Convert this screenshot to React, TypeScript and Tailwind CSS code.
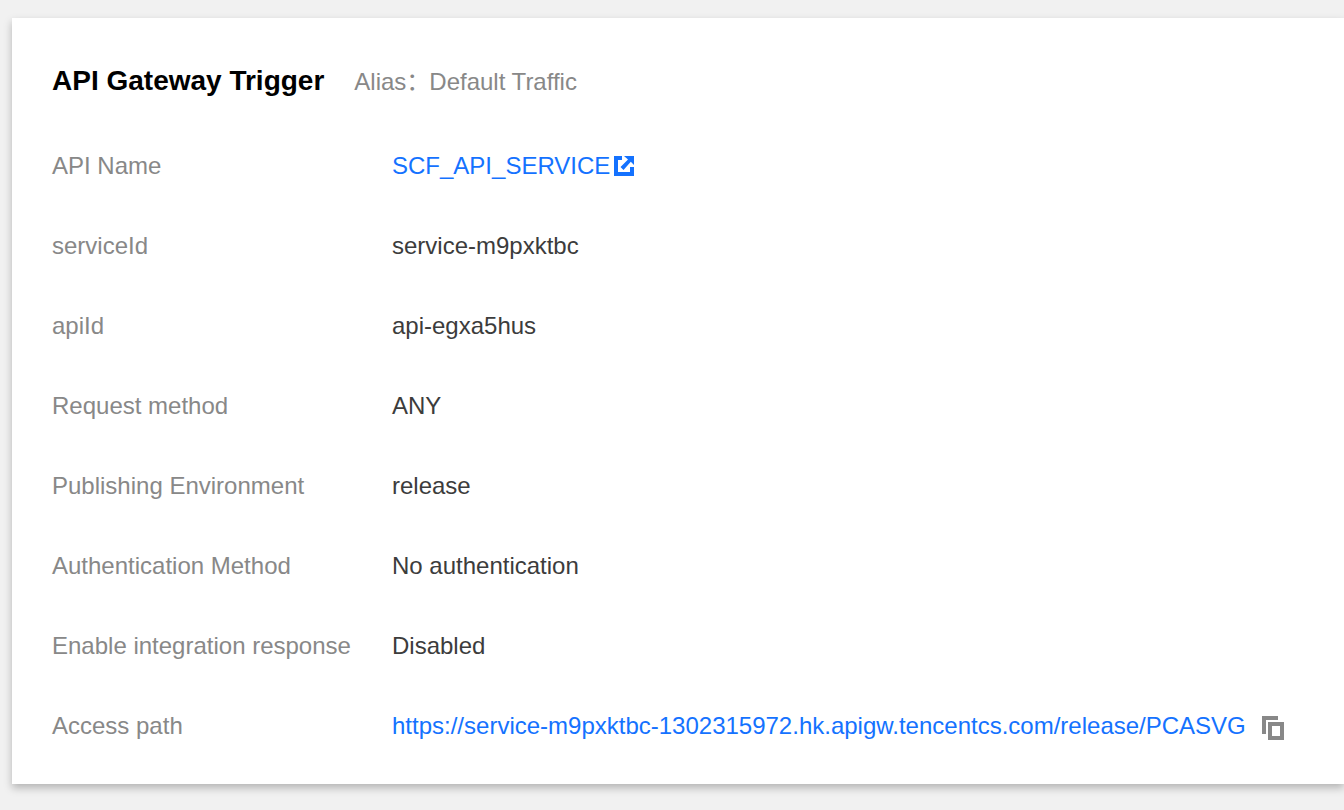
import type { ReactNode } from "react";

function Row({ label, children }: { label: string; children: ReactNode }) {
  return (
    <div className="flex h-20 items-center">
      <dt className="w-[340px] shrink-0 text-[#888888]">{label}</dt>
      <dd className="flex items-center text-[#3c3c3c]">{children}</dd>
    </div>
  );
}

function JumpIcon() {
  return (
    <svg width="20" height="20" viewBox="0 0 20 20" aria-hidden="true">
      <path fill="#1472ff" d="M0 0h8v4H4v12h12v-5h4v9H0zM10 0h10v9l-3.200-3.200-7.300 8.200-3-3 7.500-7.500z" />
    </svg>
  );
}

function CopyIcon() {
  return (
    <svg width="22" height="24" viewBox="0 0 22 24" fill="none" stroke="#888888" strokeWidth="4" aria-hidden="true">
      <path d="M2 18V2H16" />
      <path d="M8 8h12v14H8z" />
    </svg>
  );
}

const details = [
  ["serviceId", "service-m9pxktbc"],
  ["apiId", "api-egxa5hus"],
  ["Request method", "ANY"],
  ["Publishing Environment", "release"],
  ["Authentication Method", "No authentication"],
  ["Enable integration response", "Disabled"],
];

export default function App() {
  return (
    <main className="min-h-screen overflow-x-hidden bg-[#f1f1f1] pt-[18px] pb-[26px] pl-3 font-['Liberation_Sans','Noto_Sans_CJK_SC',sans-serif] text-[24px] leading-8">
      <section className="bg-white px-10 pt-[47px] pb-[18px] shadow-[0_4px_8px_rgba(0,0,0,0.25)]">
        <header className="flex h-8 items-baseline">
          <h1 className="text-[28px] font-bold text-black">API Gateway Trigger</h1>
          <p className="ml-[30px] flex text-[#888888]">
            <span lang="zh-CN" className="w-[75px]">Alias：</span>
            <span>Default Traffic</span>
          </p>
        </header>
        <dl className="pt-[29px]">
          <Row label="API Name">
            <a href="#api" className="flex items-center gap-1 text-[#1472ff]">
              SCF_API_SERVICE
              <JumpIcon />
            </a>
          </Row>
          {details.map(([label, value]) => (
            <Row key={label} label={label}>{value}</Row>
          ))}
          <Row label="Access path">
            <a href="#access-path" className="whitespace-nowrap text-[#1472ff]">
              https://service-m9pxktbc-1302315972.hk.apigw.tencentcs.com/release/PCASVG
            </a>
            <button type="button" aria-label="Copy access path" className="ml-4 shrink-0 pt-1">
              <CopyIcon />
            </button>
          </Row>
        </dl>
      </section>
    </main>
  );
}
